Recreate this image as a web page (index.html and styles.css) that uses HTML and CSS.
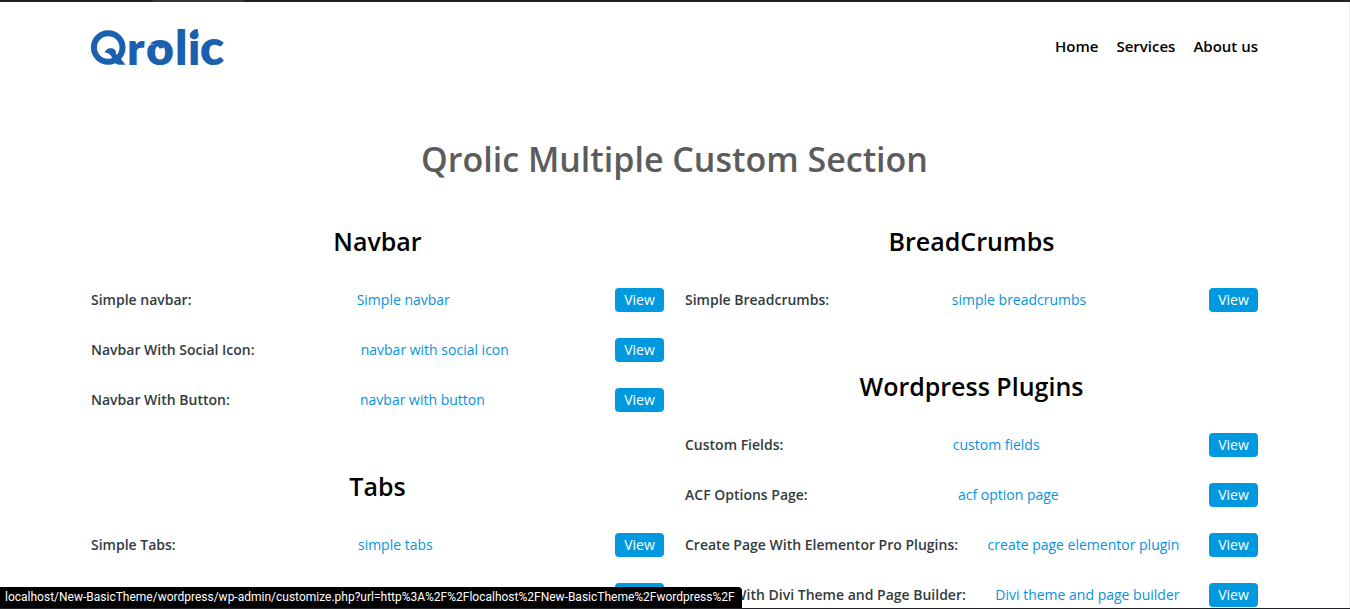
FILE: index.html
```html
<!DOCTYPE html>
<html lang="en">
<head>
<meta charset="utf-8">
<meta name="viewport" content="width=device-width, initial-scale=1">
<title>Qrolic Multiple Custom Section</title>
<link rel="stylesheet" href="styles.css">
</head>
<body>
<div class="window-edge"><span class="window-tab"></span></div>
<div class="page">
  <header class="header">
    <a class="logo" href="#" aria-label="Qrolic">
      <svg class="logo-art" viewBox="0 0 138 42" width="138" height="42">
        <circle class="logo-ring" cx="17.2" cy="22.5" r="14.3"/>
        <path class="logo-shape" d="M13.5 27.6c1.500-3.600 4.500-5 7.500-4.300 3.200.7 4.400 3 3.900 5.400 3 2.300 5.600 6.300 9.600 11h-6.500c-4 0-5.500-4.500-7.300-7.700-1.300-2.800-4-4.300-7.200-4.400z"/>
        <g class="logo-text">
          <text x="36" y="40" font-size="46">r</text>
          <text x="55" y="40" font-size="48">o</text>
          <text x="84" y="40" font-size="48">l</text>
          <text x="97" y="40" font-size="46">i</text>
          <text x="109" y="40" font-size="50">c</text>
        </g>
        <path class="logo-cut" d="M57.500 20.500c4-2.500 8-2.500 11.500 1.500"/>
        <path class="logo-shape" d="M59 18.500c5-2.500 11-1.500 14 4.500l-4.500.5c-1.500-3-4.500-4.700-9.500-5z"/>
        <path class="logo-shape" d="M99.400 13c-.4-5.500 1.500-8.800 7.400-9 .8 5.500-1.500 9-7.400 9z"/>
      </svg>
    </a>
    <nav class="nav">
      <a href="#">Home</a>
      <a href="#">Services</a>
      <a href="#">About us</a>
    </nav>
  </header>
  <main>
    <h1 class="title">Qrolic Multiple Custom Section</h1>
    <div class="columns">
      <div class="column">
        <section class="group">
          <h2>Navbar</h2>
          <div class="row"><span class="label">Simple navbar:</span><a class="link" href="#">Simple navbar</a><button class="view" type="button">View</button></div>
          <div class="row"><span class="label">Navbar With Social Icon:</span><a class="link" href="#">navbar with social icon</a><button class="view" type="button">View</button></div>
          <div class="row"><span class="label">Navbar With Button:</span><a class="link" href="#">navbar with button</a><button class="view" type="button">View</button></div>
        </section>
        <section class="group">
          <h2>Tabs</h2>
          <div class="row"><span class="label">Simple Tabs:</span><a class="link" href="#">simple tabs</a><button class="view" type="button">View</button></div>
          <div class="row row-end"><button class="view" type="button" aria-label="View"></button></div>
        </section>
      </div>
      <div class="column">
        <section class="group">
          <h2>BreadCrumbs</h2>
          <div class="row"><span class="label">Simple Breadcrumbs:</span><a class="link" href="#">simple breadcrumbs</a><button class="view" type="button">View</button></div>
        </section>
        <section class="group">
          <h2>Wordpress Plugins</h2>
          <div class="row"><span class="label">Custom Fields:</span><a class="link" href="#">custom fields</a><button class="view" type="button">View</button></div>
          <div class="row"><span class="label">ACF Options Page:</span><a class="link" href="#">acf option page</a><button class="view" type="button">View</button></div>
          <div class="row"><span class="label">Create Page With Elementor Pro Plugins:</span><a class="link" href="#">create page elementor plugin</a><button class="view" type="button">View</button></div>
          <div class="row"><span class="label">Create With Divi Theme and Page Builder:</span><a class="link" href="#">Divi theme and page builder</a><button class="view" type="button">View</button></div>
        </section>
      </div>
    </div>
  </main>
</div>
<div class="status">localhost/New-BasicTheme/wordpress/wp-admin/customize.php?url=http%3A%2F%2Flocalhost%2FNew-BasicTheme%2Fwordpress%2F</div>
<div class="window-foot"></div>
</body>
</html>
```

FILE: styles.css
```css
* { box-sizing: border-box; }

body {
  margin: 0;
  height: 100vh;
  overflow: hidden;
  background: #fff;
  color: #000;
  font-family: "Open Sans", "Noto Sans", sans-serif;
  font-size: 14px;
  line-height: 20px;
}

a { color: inherit; text-decoration: none; }

.window-edge { height: 2px; padding-left: 153px; background: #202124; }
.window-tab { display: block; width: 90px; height: 2px; background: #35363a; }

.page { padding: 0 91px; border-right: 1px solid #ececec; }

.header {
  display: flex;
  align-items: center;
  justify-content: space-between;
  height: 88px;
}

.logo { display: block; }
.logo-art { display: block; overflow: visible; }
.logo-text { font-family: Lato, sans-serif; font-weight: 800; fill: #1b5faf; }
.logo-shape { fill: #1b5faf; }
.logo-ring { fill: none; stroke: #1b5faf; stroke-width: 6; }
.logo-cut { fill: none; stroke: #fff; stroke-width: 1; }

.nav { display: flex; gap: 18px; font-size: 15px; font-weight: 600; }

.title {
  margin: 44px 0 0;
  color: #5c5c5c;
  font-size: 34px;
  font-weight: 600;
  line-height: 50px;
  text-align: center;
}

.columns {
  display: grid;
  grid-template-columns: 1fr 1fr;
  gap: 21px;
  margin-top: 39px;
}

.group { padding-bottom: 30px; }

h2 {
  margin: 0 0 29px;
  font-size: 25px;
  font-weight: 600;
  line-height: 36px;
  text-align: center;
}

.row {
  display: flex;
  align-items: center;
  justify-content: space-between;
  height: 24px;
  margin-bottom: 26px;
}

.row-end { justify-content: flex-end; }
.label { color: #333b3e; font-weight: 600; }
.link { color: #0693dd; }

.view {
  width: 49px;
  height: 24px;
  padding: 0;
  border: 0;
  border-radius: 4px;
  background: #0099e0;
  color: #fff;
  font: 500 14px/24px "Open Sans", "Noto Sans", sans-serif;
}

.status {
  position: fixed;
  left: 0;
  bottom: 1px;
  padding: 0 7px 0 5px;
  border-top-right-radius: 4px;
  background: #000;
  color: #fff;
  font-family: Roboto, "Open Sans", sans-serif;
  font-size: 12px;
  line-height: 21px;
}

.window-foot {
  position: fixed;
  right: 0;
  bottom: 0;
  left: 0;
  height: 1px;
  background: #202124;
}
```
